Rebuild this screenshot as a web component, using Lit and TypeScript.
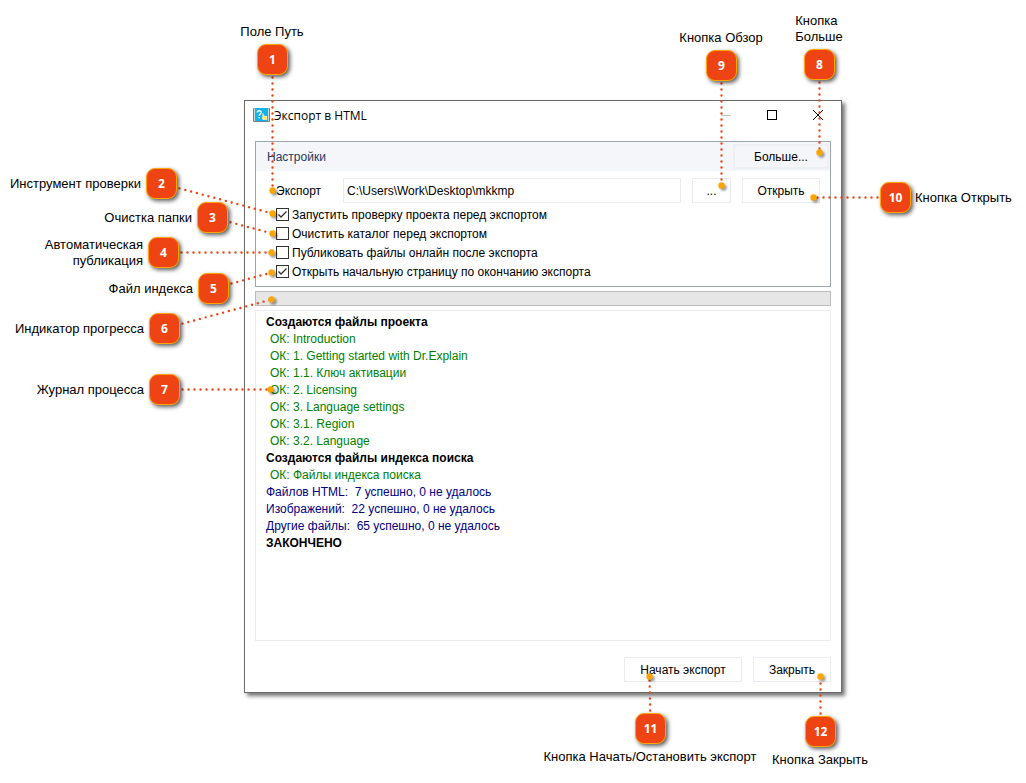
import { LitElement, html, svg, css } from "lit";
import { customElement } from "lit/decorators.js";
import { classMap } from "lit/directives/class-map.js";
import { styleMap } from "lit/directives/style-map.js";

type Side = "left" | "right";
type Place = "above" | "below" | "before" | "after";

interface Callout {
  n: number;
  text: string;
  side: Side;
  place: Place;
  /* badge centre and target; x is measured from the named side */
  x: number;
  y: number;
  tx: number;
  ty: number;
}

const BADGE = 30;

const CALLOUTS: Callout[] = [
  { n: 1, text: "Поле Путь", side: "left", place: "above", x: 272, y: 59, tx: 272, ty: 190 },
  { n: 2, text: "Инструмент проверки", side: "left", place: "before", x: 161, y: 183, tx: 272, ty: 213 },
  { n: 3, text: "Очистка папки", side: "left", place: "before", x: 212, y: 217, tx: 272, ty: 233 },
  { n: 4, text: "Автоматическая\nпубликация", side: "left", place: "before", x: 163, y: 252, tx: 271, ty: 252 },
  { n: 5, text: "Файл индекса", side: "left", place: "before", x: 213, y: 288, tx: 271, ty: 272 },
  { n: 6, text: "Индикатор прогресса", side: "left", place: "before", x: 164, y: 328, tx: 271, ty: 299 },
  { n: 7, text: "Журнал процесса", side: "left", place: "before", x: 164, y: 389, tx: 270, ty: 389 },
  { n: 8, text: "Кнопка\nБольше", side: "right", place: "above", x: 207, y: 64, tx: 207, ty: 152 },
  { n: 9, text: "Кнопка Обзор", side: "right", place: "above", x: 305, y: 65, tx: 305, ty: 185 },
  { n: 10, text: "Кнопка Открыть", side: "right", place: "after", x: 131, y: 197, tx: 213, ty: 197 },
  { n: 11, text: "Кнопка Начать/Остановить экспорт", side: "right", place: "below", x: 376, y: 728, tx: 377, ty: 676 },
  { n: 12, text: "Кнопка Закрыть", side: "right", place: "below", x: 206, y: 731, tx: 206, ty: 676 },
];

const LOG: { kind: "head" | "ok" | "sum"; text: string }[] = [
  { kind: "head", text: "Создаются файлы проекта" },
  { kind: "ok", text: "ОК: Introduction" },
  { kind: "ok", text: "ОК: 1. Getting started with Dr.Explain" },
  { kind: "ok", text: "ОК: 1.1. Ключ активации" },
  { kind: "ok", text: "ОК: 2. Licensing" },
  { kind: "ok", text: "ОК: 3. Language settings" },
  { kind: "ok", text: "ОК: 3.1. Region" },
  { kind: "ok", text: "ОК: 3.2. Language" },
  { kind: "head", text: "Создаются файлы индекса поиска" },
  { kind: "ok", text: "ОК: Файлы индекса поиска" },
  { kind: "sum", text: "Файлов HTML:  7 успешно, 0 не удалось" },
  { kind: "sum", text: "Изображений:  22 успешно, 0 не удалось" },
  { kind: "sum", text: "Другие файлы:  65 успешно, 0 не удалось" },
  { kind: "head", text: "ЗАКОНЧЕНО" },
];

const OPTIONS = [
  { id: "check", text: "Запустить проверку проекта перед экспортом", on: true },
  { id: "clean", text: "Очистить каталог перед экспортом", on: false },
  { id: "publish", text: "Публиковать файлы онлайн после экспорта", on: false },
  { id: "index", text: "Открыть начальную страницу по окончанию экспорта", on: true },
];

@customElement("export-dialog")
class ExportDialog extends LitElement {
  static styles = css`
    :host {
      display: flex;
      flex-direction: column;
      box-sizing: border-box;
      min-height: 593px;
      padding: 0 10px 10px;
      background: #fff;
      border: 1px solid #6b6b6b;
      box-shadow: 3px 3px 4px rgba(0, 0, 0, 0.55);
      color: #000;
      font: 12px/16px "Liberation Sans", Arial, sans-serif;
    }
    .titlebar {
      display: flex;
      align-items: center;
      height: 28px;
      margin-bottom: 12px;
    }
    .title {
      flex: 1;
      margin: 0 0 0 4px;
      padding-top: 2px;
      font: 12px/16px "Open Sans", "Noto Sans", sans-serif;
    }
    .appicon { margin-left: -2px; }
    .sys {
      width: 46px;
      height: 28px;
      padding: 0;
      border: 0;
      background: none;
      display: grid;
      place-items: center;
    }
    .sysgroup { display: flex; margin-right: -10px; }
    .settings {
      margin: 0;
      border: 1px solid #9aa7b0;
      padding: 0 0 5px;
    }
    .sethead {
      display: flex;
      align-items: center;
      justify-content: space-between;
      height: 29px;
      padding: 0 1px 0 11px;
      background: #f4f6f9;
    }
    .settitle { margin: 0; font-weight: 400; font-size: 12px; color: #1f3864; }
    .btn {
      box-sizing: border-box;
      height: 25px;
      padding: 0;
      border: 1px solid #e9ebf0;
      background: #fff;
      color: #000;
      font: inherit;
    }
    .more { width: 96px; border-width: 2px; border-color: #edeff3; background: #f4f6f9; }
    .pathrow {
      display: flex;
      align-items: center;
      padding: 7px 10px 0 20px;
    }
    .pathlabel { width: 67px; }
    .path {
      flex: 1;
      min-width: 0;
      box-sizing: border-box;
      height: 25px;
      border: 1px solid #e9ebf0;
      padding: 0 3px;
      font: inherit;
      color: #000;
    }
    .browse { width: 39px; margin: 0 11px; }
    .open { width: 78px; }
    .opts { list-style: none; margin: 2px 0 0; padding: 0 0 0 20px; }
    .opt { display: flex; align-items: center; height: 19px; }
    .box {
      appearance: none;
      box-sizing: border-box;
      width: 13px;
      height: 13px;
      margin: 0 3px 0 0;
      border: 1px solid #333;
      background: #fff;
    }
    .box:checked {
      background: #fff
        url("data:image/svg+xml,%3Csvg xmlns='http://www.w3.org/2000/svg' viewBox='0 0 11 11'%3E%3Cpath d='M1.5 5.5 4 8 9.5 2.5' fill='none' stroke='%23333' stroke-width='1.3'/%3E%3C/svg%3E")
        center / 11px 11px;
    }
    .progress {
      appearance: none;
      display: block;
      box-sizing: border-box;
      width: 100%;
      height: 15px;
      margin: 4px 0;
      border: 1px solid #bcbcbc;
      background: #e6e6e6;
    }
    .progress::-webkit-progress-bar { background: #e6e6e6; }
    .log {
      flex: 1;
      margin: 0;
      padding: 3px 10px;
      list-style: none;
      border: 1px solid #ebebf0;
      line-height: 17px;
    }
    .head,
    .ok,
    .sum { white-space: pre-wrap; }
    .head { font-weight: 700; }
    .ok { color: #008000; padding-left: 4px; }
    .sum { color: #000080; }
    .foot {
      display: flex;
      justify-content: flex-end;
      gap: 11px;
      margin-top: 16px;
    }
    .start { width: 118px; }
    .close { width: 78px; }
  `;

  render() {
    return html`
      <header class="titlebar">
        <svg class="appicon" width="17" height="16" viewBox="0 0 17 16" aria-hidden="true">
          <path d="M1.5 1.5h-1v13h16v-13h-1" fill="#d5dce0" stroke="#71818c" />
          <rect x="2" y="1" width="13" height="13" fill="#12b4ee" />
          <path
            d="M4.2 5.6C4.2 3.2 8.2 3.2 8.2 5.4 8.2 7 6.2 6.9 6.2 8.8M6.2 10v1.6"
            fill="none"
            stroke="#fff"
            stroke-width="1.4"
          />
          <path d="M9.2 6.5h1.3l.6 2.2 3 .4V13H10L8.4 10.6l1-.6z" fill="#ffe88a" />
        </svg>
        <h1 class="title">Экспорт в HTML</h1>
        <div class="sysgroup">
          <button class="sys" aria-label="Свернуть">
            <svg width="10" height="10"><path d="M0 5.5h10" stroke="#c4c4c4" /></svg>
          </button>
          <button class="sys" aria-label="Развернуть">
            <svg width="10" height="10"><rect x=".5" y=".5" width="9" height="9" fill="none" stroke="#000" /></svg>
          </button>
          <button class="sys" aria-label="Закрыть окно">
            <svg width="10" height="10"><path d="M0 0 10 10M10 0 0 10" stroke="#000" /></svg>
          </button>
        </div>
      </header>
      <section class="settings">
        <div class="sethead">
          <h2 class="settitle">Настройки</h2>
          <button class="btn more">Больше...</button>
        </div>
        <div class="pathrow">
          <label class="pathlabel" for="path">Экспорт</label>
          <input class="path" id="path" type="text" value="C:\\Users\\Work\\Desktop\\mkkmp" />
          <button class="btn browse" aria-label="Обзор">...</button>
          <button class="btn open">Открыть</button>
        </div>
        <ul class="opts">
          ${OPTIONS.map(
            (o) => html`<li class="opt">
              <input class="box" type="checkbox" id=${o.id} ?checked=${o.on} />
              <label for=${o.id}>${o.text}</label>
            </li>`,
          )}
        </ul>
      </section>
      <progress class="progress" max="100" value="0" aria-label="Прогресс"></progress>
      <ol class="log">
        ${LOG.map((l) => html`<li class=${l.kind}>${l.text}</li>`)}
      </ol>
      <footer class="foot">
        <button class="btn start">Начать экспорт</button>
        <button class="btn close">Закрыть</button>
      </footer>
    `;
  }
}

@customElement("app-root")
class AppRoot extends LitElement {
  static styles = css`
    :host {
      display: block;
      position: relative;
      box-sizing: border-box;
      min-width: 900px;
      min-height: 100vh;
      padding: 100px 184px 90px 244px;
      overflow: hidden;
      background: #fff;
      font: 13px/16px "Liberation Sans", Arial, sans-serif;
      color: #000;
    }
    /* zero-width layers pinned to either edge, so callouts follow their side */
    .layer {
      position: absolute;
      top: 0;
      width: 0;
      height: 0;
      pointer-events: none;
    }
    .left { left: 0; }
    .right { left: 100%; }
    .lines {
      position: absolute;
      top: 0;
      left: 0;
      width: 1px;
      height: 1px;
      overflow: visible;
    }
    .line { stroke: #ee4413; stroke-width: 2.4; stroke-linecap: round; stroke-dasharray: 0 6; fill: none; }
    .dot { fill: #ffa500; filter: drop-shadow(2px 2px 1px rgba(0, 0, 0, 0.4)); }
    .pin { position: absolute; width: 0; height: 0; }
    .badge {
      position: absolute;
      top: -15px;
      left: -15px;
      box-sizing: border-box;
      width: 31px;
      height: 31px;
      border: 1px solid #ffa500;
      border-radius: 9px;
      background: #ee4413;
      box-shadow: 2px 2px 4px rgba(0, 0, 0, 0.65);
      color: #fff;
      font: 700 12px/29px "Open Sans", "Noto Sans", sans-serif;
      text-align: center;
    }
    .label { position: absolute; white-space: pre; }
    .above .label { bottom: 19px; left: 0; transform: translateX(-50%); }
    .below .label { top: 21px; left: 0; transform: translateX(-50%); }
    .before .label { right: 20px; top: 1px; transform: translateY(-50%); text-align: right; }
    .after .label { left: 20px; top: 1px; transform: translateY(-50%); }
  `;

  private layer(side: Side) {
    const sign = side === "left" ? 1 : -1;
    const items = CALLOUTS.filter((c) => c.side === side);
    return html`<div class=${classMap({ layer: true, [side]: true })}>
      <svg class="lines" aria-hidden="true">
        <g transform="translate(.5 .5)">
          ${items.map((c) => {
            const dx = sign * (c.tx - c.x);
            const dy = c.ty - c.y;
            const k = (BADGE / 2 + 3) / Math.max(Math.abs(dx), Math.abs(dy));
            const x = sign * c.x;
            return svg`<path class="line" d="M${x + dx * k} ${c.y + dy * k}L${x + dx} ${c.y + dy}"></path>
              <circle class="dot" cx=${x + dx} cy=${c.y + dy} r="3.2"></circle>`;
          })}
        </g>
      </svg>
      ${items.map(
        (c) => html`<div
          class=${classMap({ pin: true, [c.place]: true })}
          style=${styleMap({ left: `${sign * c.x}px`, top: `${c.y}px` })}
        >
          <span class="badge">${c.n}</span><span class="label">${c.text}</span>
        </div>`,
      )}
    </div>`;
  }

  render() {
    return html`<export-dialog></export-dialog>${this.layer("left")}${this.layer("right")}`;
  }
}
